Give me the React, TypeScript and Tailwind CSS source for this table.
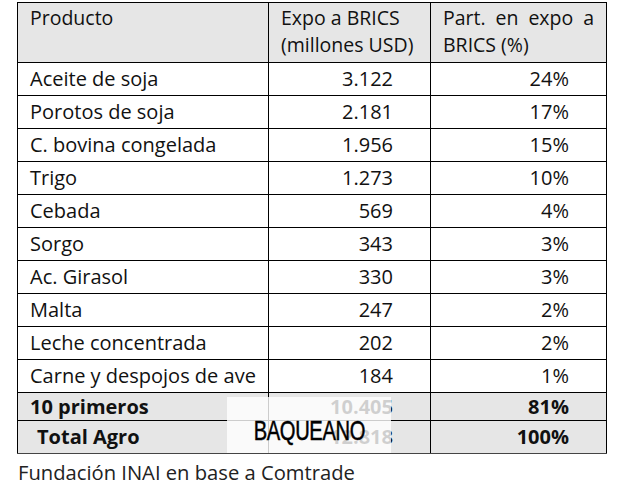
const rows: [string, string, string][] = [
  ["Aceite de soja", "3.122", "24%"],
  ["Porotos de soja", "2.181", "17%"],
  ["C. bovina congelada", "1.956", "15%"],
  ["Trigo", "1.273", "10%"],
  ["Cebada", "569", "4%"],
  ["Sorgo", "343", "3%"],
  ["Ac. Girasol", "330", "3%"],
  ["Malta", "247", "2%"],
  ["Leche concentrada", "202", "2%"],
  ["Carne y despojos de ave", "184", "1%"],
];

export default function App() {
  return (
    <div className="w-[619px] h-[480px] bg-white overflow-hidden relative font-['Open_Sans',sans-serif] text-[#111]">
      <div className="pt-[2px] pl-[17px]">
        <table className="border-collapse text-[20px]">
          <thead>
            <tr className="bg-[#e6e6e6] h-[60px] align-top text-[19.5px]">
              <th className="w-[251px] border border-black font-normal text-left pl-3 pt-[1px] leading-[27px]">
                Producto
              </th>
              <th className="w-[162px] border border-black font-normal text-left pl-3 pt-[1px] leading-[27px]">
                Expo a BRICS
                <br />
                (millones USD)
              </th>
              <th className="w-[176px] border border-black font-normal text-left pl-3 pr-3 pt-[1px] leading-[27px]">
                <div className="text-justify [text-align-last:justify]">Part. en expo a</div>
                <div>BRICS (%)</div>
              </th>
            </tr>
          </thead>
          <tbody>
            {rows.map(([p, v, s]) => (
              <tr key={p} className="h-[33px]">
                <td className="border border-black pl-3 leading-[32px]">{p}</td>
                <td className="border border-black text-right pr-[37px] leading-[32px]">{v}</td>
                <td className="border border-black text-right pr-[37px] leading-[32px]">{s}</td>
              </tr>
            ))}
            <tr className="h-[28px] bg-[#e6e6e6] font-bold">
              <td className="border border-black pl-3 leading-[27px]">10 primeros</td>
              <td className="border border-black text-right pr-[37px] leading-[27px]">10.405</td>
              <td className="border border-black text-right pr-[37px] leading-[27px]">81%</td>
            </tr>
            <tr className="h-[33px] bg-[#e6e6e6] font-bold">
              <td className="border border-black border-b-[#444] pl-[19px] leading-[32px]">Total Agro</td>
              <td className="border border-black border-b-[#444] text-right pr-[37px] leading-[32px]">12.818</td>
              <td className="border border-black border-b-[#444] text-right pr-[37px] leading-[32px]">100%</td>
            </tr>
          </tbody>
        </table>
      </div>
      <p className="pl-[18px] mt-[5px] text-[20.2px] leading-[26px] text-[#222]">
        Fundación INAI en base a Comtrade
      </p>
      <div className="absolute left-[227px] top-[397px] w-[164px] h-[56px] bg-white/80 flex items-center justify-center pt-[12px]">
        <span className="font-['Liberation_Sans',sans-serif] text-[28px] leading-none text-black tracking-[-0.5px] scale-x-[0.72] [-webkit-text-stroke:0.5px_black]">
          BAQUEANO
        </span>
      </div>
    </div>
  );
}
